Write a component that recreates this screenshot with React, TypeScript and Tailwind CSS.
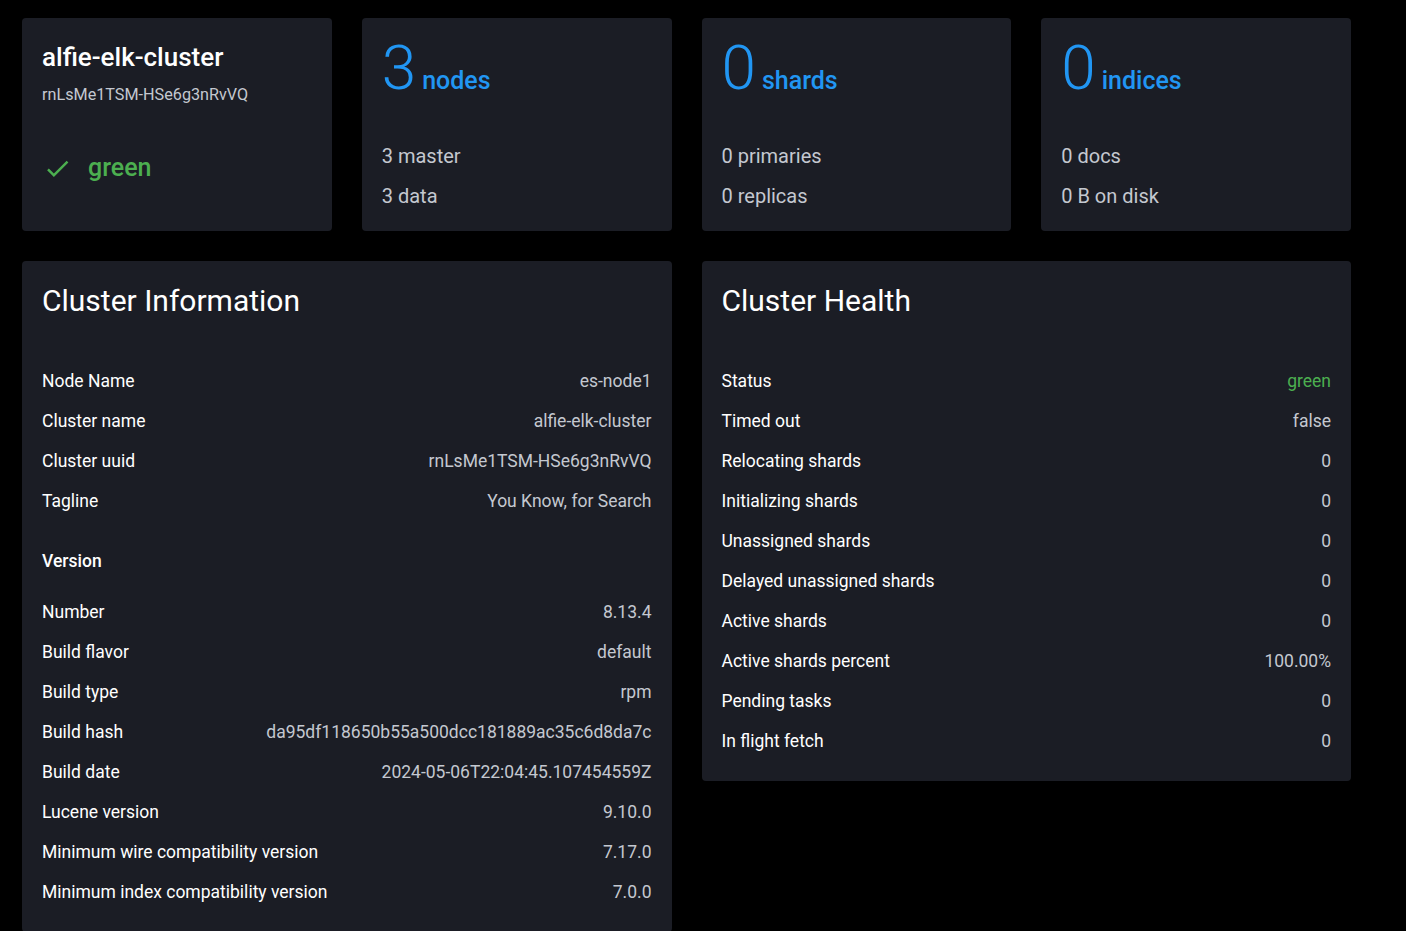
import React from 'react';

const infoRows: [string, string][] = [
  ['Node Name', 'es-node1'],
  ['Cluster name', 'alfie-elk-cluster'],
  ['Cluster uuid', 'rnLsMe1TSM-HSe6g3nRvVQ'],
  ['Tagline', 'You Know, for Search'],
];

const versionRows: [string, string][] = [
  ['Number', '8.13.4'],
  ['Build flavor', 'default'],
  ['Build type', 'rpm'],
  ['Build hash', 'da95df118650b55a500dcc181889ac35c6d8da7c'],
  ['Build date', '2024-05-06T22:04:45.107454559Z'],
  ['Lucene version', '9.10.0'],
  ['Minimum wire compatibility version', '7.17.0'],
  ['Minimum index compatibility version', '7.0.0'],
];

const healthRows: [string, string][] = [
  ['Status', 'green'],
  ['Timed out', 'false'],
  ['Relocating shards', '0'],
  ['Initializing shards', '0'],
  ['Unassigned shards', '0'],
  ['Delayed unassigned shards', '0'],
  ['Active shards', '0'],
  ['Active shards percent', '100.00%'],
  ['Pending tasks', '0'],
  ['In flight fetch', '0'],
];

function Row({ label, value, green }: { label: string; value: string; green?: boolean }) {
  return (
    <div className="flex h-10 items-center justify-between text-[17.5px]">
      <span className="text-white">{label}</span>
      <span className={green ? 'text-[#4caf50]' : 'text-[#c4c8d0]'}>{value}</span>
    </div>
  );
}

function StatCard({ count, unit, lines }: { count: string; unit: string; lines: string[] }) {
  return (
    <div className="h-[213px] rounded bg-[#1b1d25] px-5 pt-[19px]">
      <div className="flex items-baseline gap-1.5 text-[#2196f3]">
        <span className="text-[62px] font-light leading-[62px]">{count}</span>
        <span className="text-[25px] font-medium">{unit}</span>
      </div>
      <div className="mt-[36px] text-[20px] text-[#c4c8d0]">
        {lines.map((l) => (
          <div key={l} className="flex h-10 items-center">
            {l}
          </div>
        ))}
      </div>
    </div>
  );
}

export default function App() {
  return (
    <div
      className="min-h-[931px] bg-black pl-[22px] pt-[18px]"
      style={{ fontFamily: 'Roboto, "Noto Sans", sans-serif' }}
    >
      <div className="flex w-[1329px] flex-col gap-[30px]">
        <div className="grid grid-cols-4 gap-[30px]">
          <div className="h-[213px] rounded bg-[#1b1d25] px-5 pt-[23px]">
            <div className="text-[26px] font-medium leading-8 text-white">alfie-elk-cluster</div>
            <div className="mt-[10px] text-[16.2px] text-[#c4c8d0]">rnLsMe1TSM-HSe6g3nRvVQ</div>
            <div className="mt-[42px] flex items-center gap-[16px] pl-[1px] text-[#4caf50]">
              <svg width="29" height="29" viewBox="0 0 24 24" fill="currentColor">
                <path d="M9 16.17 4.83 12l-1.42 1.41L9 19 21 7l-1.41-1.41z" />
              </svg>
              <span className="text-[25px] font-medium">green</span>
            </div>
          </div>
          <StatCard count="3" unit="nodes" lines={['3 master', '3 data']} />
          <StatCard count="0" unit="shards" lines={['0 primaries', '0 replicas']} />
          <StatCard count="0" unit="indices" lines={['0 docs', '0 B on disk']} />
        </div>

        <div className="grid grid-cols-2 items-start gap-[30px]">
          <div className="rounded bg-[#1b1d25] px-5 pb-5 pt-[22px]">
            <h2 className="text-[30px] leading-9 text-white">Cluster Information</h2>
            <div className="mt-[42px]">
              {infoRows.map(([l, v]) => (
                <Row key={l} label={l} value={v} />
              ))}
              <div className="mt-5 flex h-10 items-center text-[17.5px] font-medium text-white">Version</div>
              <div className="mt-[11px]">
                {versionRows.map(([l, v]) => (
                  <Row key={l} label={l} value={v} />
                ))}
              </div>
            </div>
          </div>

          <div className="rounded bg-[#1b1d25] px-5 pb-5 pt-[22px]">
            <h2 className="text-[30px] leading-9 text-white">Cluster Health</h2>
            <div className="mt-[42px]">
              {healthRows.map(([l, v]) => (
                <Row key={l} label={l} value={v} green={l === 'Status'} />
              ))}
            </div>
          </div>
        </div>
      </div>
    </div>
  );
}
